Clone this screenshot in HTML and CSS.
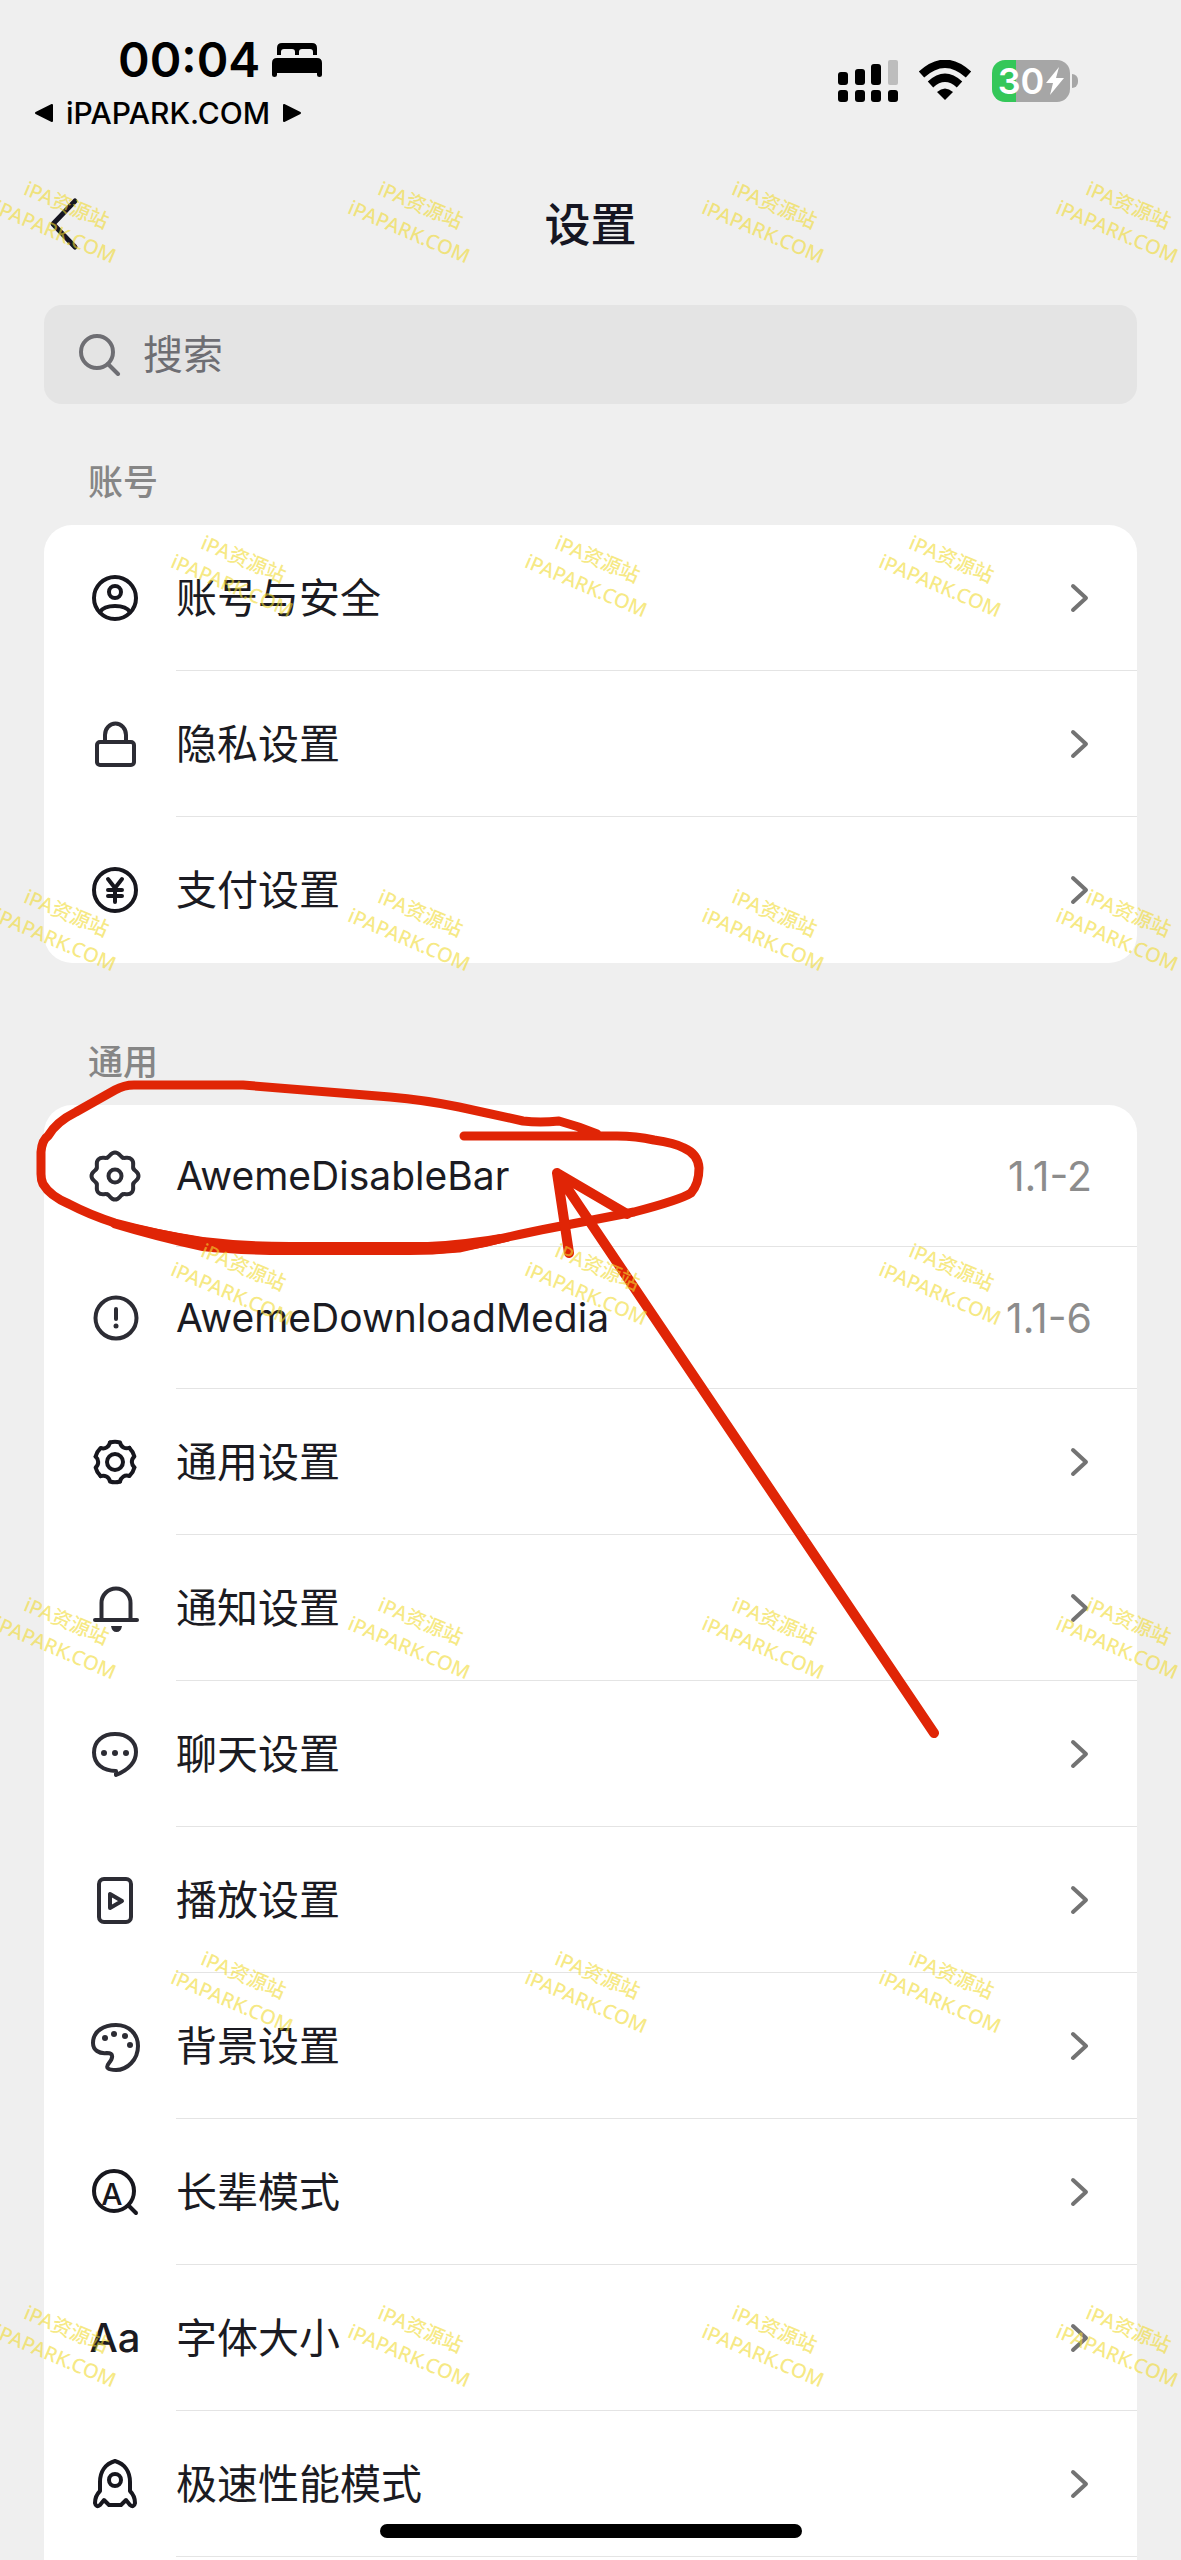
FILE: index.html
```html
<!DOCTYPE html>
<html lang="zh-CN">
<head>
<meta charset="utf-8">
<meta name="viewport" content="width=device-width, initial-scale=1">
<title>设置</title>
<link rel="stylesheet" href="styles.css">
</head>
<body>
<div class="screen">
  <header class="status">
    <div class="status-left">
      <div class="clock"><span>00:04</span>
        <svg class="bed" viewBox="0 0 50 36" aria-hidden="true"><path d="M5 13V6Q5 1 10 1H40Q45 1 45 6V13H41V10Q41 7 38 7H30Q27 7 27 10V13H23V10Q23 7 20 7H12Q9 7 9 10V13ZM5 16H45Q50 16 50 21V33Q50 35 47.500 35Q45 35 45 33V31H5V33Q5 35 2.500 35Q0 35 0 33V21Q0 16 5 16Z"/></svg>
      </div>
      <div class="return">
        <svg class="tri" viewBox="0 0 20 20" aria-hidden="true"><path d="M2 10L18 2V18Z"/></svg>
        <a href="#">iPAPARK.COM</a>
        <svg class="tri" viewBox="0 0 20 20" aria-hidden="true"><path d="M18 10L2 2V18Z"/></svg>
      </div>
    </div>
    <div class="status-right">
      <svg class="signal" viewBox="0 0 60 42" aria-hidden="true">
        <rect x="0" y="12" width="10" height="13" rx="3"/><rect x="17" y="9" width="10" height="16" rx="3"/><rect x="33" y="4" width="10" height="21" rx="3"/><rect class="dim" x="50" y="0" width="10" height="25" rx="2"/>
        <rect x="0" y="30" width="10" height="12" rx="3"/><rect x="17" y="30" width="10" height="12" rx="3"/><rect x="33" y="30" width="10" height="12" rx="3"/><rect x="50" y="30" width="10" height="12" rx="3"/>
      </svg>
      <svg class="wifi" viewBox="0 0 54 42" aria-hidden="true">
        <path class="arc" d="M3.500 14.500Q27 -7 50.500 14.500M12.500 24.500Q27 11 41.500 24.500"/><path d="M19 32Q27 25 35 32L27 40Z"/>
      </svg>
      <div class="battery"><span>30</span><svg viewBox="0 0 18 30" aria-hidden="true"><path d="M13 1L0 17H7L4 29L18 12H10Z"/></svg></div>
    </div>
  </header>

  <nav class="nav">
    <button class="back" type="button" aria-label="返回"><svg viewBox="0 0 36 56" aria-hidden="true"><path d="M31 5L9 28L31 51"/></svg></button>
    <h1>设置</h1>
  </nav>

  <label class="search">
    <svg viewBox="0 0 42 42" aria-hidden="true"><circle cx="18" cy="18" r="16"/><path d="M29 30L39 40"/></svg>
    <input type="search" placeholder="搜索" aria-label="搜索">
  </label>

  <section class="group">
    <h2>账号</h2>
    <ul class="card">
      <li><a class="row" href="#"><svg class="icon" viewBox="0 0 48 48"><circle cx="24" cy="24" r="21"/><circle cx="24" cy="18" r="6"/><path d="M9 38C14 30 34 30 39 38"/></svg><span class="cell"><span>账号与安全</span><svg class="chev" viewBox="0 0 24 32"><path d="M5 4L18 16L5 28"/></svg></span></a></li>
      <li><a class="row" href="#"><svg class="icon soft" viewBox="0 0 48 48"><rect x="6" y="22" width="37" height="23" rx="3"/><path d="M14 22V15A10.500 11.500 0 0 1 35 15V22"/></svg><span class="cell"><span>隐私设置</span><svg class="chev" viewBox="0 0 24 32"><path d="M5 4L18 16L5 28"/></svg></span></a></li>
      <li><a class="row" href="#"><svg class="icon" viewBox="0 0 48 48"><circle cx="24" cy="24" r="21"/><path d="M17 13L24 22L31 13M24 22V36M17 24H31M17 30H31"/></svg><span class="cell"><span>支付设置</span><svg class="chev" viewBox="0 0 24 32"><path d="M5 4L18 16L5 28"/></svg></span></a></li>
    </ul>
  </section>

  <section class="group last">
    <h2>通用</h2>
    <ul class="card">
      <li><a class="row plugin" href="#"><svg class="icon soft" viewBox="0 0 48 48"><g transform="translate(24 24)"><path id="lobe" d="M-7.600 -18.400C-4.800 -19.500 -4.500 -23.500 0 -23.500C4.500 -23.500 4.800 -19.500 7.600 -18.400"/><use href="#lobe" transform="rotate(45)"/><use href="#lobe" transform="rotate(90)"/><use href="#lobe" transform="rotate(135)"/><use href="#lobe" transform="rotate(180)"/><use href="#lobe" transform="rotate(225)"/><use href="#lobe" transform="rotate(270)"/><use href="#lobe" transform="rotate(315)"/><circle r="6.500"/></g></svg><span class="cell"><span>AwemeDisableBar</span><span class="value">1.1-2</span></span></a></li>
      <li><a class="row plugin" href="#"><svg class="icon soft" viewBox="0 0 48 48"><circle cx="25" cy="24" r="20.500"/><path d="M25 15V25"/><circle class="dot" cx="25" cy="32" r="2.500"/></svg><span class="cell"><span>AwemeDownloadMedia</span><span class="value">1.1-6</span></span></a></li>
      <li><a class="row" href="#"><svg class="icon" viewBox="0 0 48 48"><g transform="translate(24 24)"><path id="tooth" d="M-5 -19.500Q0 -21 5 -19.500C6 -14.500 10.400 -12.900 14.400 -14.100"/><use href="#tooth" transform="rotate(60)"/><use href="#tooth" transform="rotate(120)"/><use href="#tooth" transform="rotate(180)"/><use href="#tooth" transform="rotate(240)"/><use href="#tooth" transform="rotate(300)"/><circle r="8"/></g></svg><span class="cell"><span>通用设置</span><svg class="chev" viewBox="0 0 24 32"><path d="M5 4L18 16L5 28"/></svg></span></a></li>
      <li><a class="row" href="#"><svg class="icon soft" viewBox="0 0 48 48"><path d="M4 36H46M10.500 36V19A14.500 14.500 0 0 1 39.500 19V36"/><path class="dot" d="M20 42H31Q30 48 25.500 48Q21 48 20 42Z"/></svg><span class="cell"><span>通知设置</span><svg class="chev" viewBox="0 0 24 32"><path d="M5 4L18 16L5 28"/></svg></span></a></li>
      <li><a class="row" href="#"><svg class="icon soft" viewBox="0 0 48 48"><path d="M25 41C12 41 3 34 3 22.500C3 11 12 4 24 4C36 4 45 11 45 22C45 33 37 40 25 45Z"/><circle class="dot" cx="13" cy="23" r="3"/><circle class="dot" cx="24" cy="23" r="3"/><circle class="dot" cx="35" cy="23" r="3"/></svg><span class="cell"><span>聊天设置</span><svg class="chev" viewBox="0 0 24 32"><path d="M5 4L18 16L5 28"/></svg></span></a></li>
      <li><a class="row" href="#"><svg class="icon soft" viewBox="0 0 48 48"><rect x="8" y="3" width="32" height="43" rx="5"/><path d="M19 18V32L31 25Z"/></svg><span class="cell"><span>播放设置</span><svg class="chev" viewBox="0 0 24 32"><path d="M5 4L18 16L5 28"/></svg></span></a></li>
      <li><a class="row" href="#"><svg class="icon soft" viewBox="0 0 48 48"><path d="M16 31C8 32 2 28 2 21C2 9 13 3 25 3C38 3 47 12 47 24C47 38 36 48 25 48C17 48 14 46 18 41C22 36 23 31 16 31Z"/><circle class="dot" cx="14" cy="16" r="3"/><circle class="dot" cx="23" cy="12" r="3"/><circle class="dot" cx="34" cy="14" r="3"/><circle class="dot" cx="39" cy="23" r="3"/></svg><span class="cell"><span>背景设置</span><svg class="chev" viewBox="0 0 24 32"><path d="M5 4L18 16L5 28"/></svg></span></a></li>
      <li><a class="row" href="#"><svg class="icon" viewBox="0 0 48 48"><circle cx="23" cy="23" r="20"/><path d="M38 38L45 45"/><text class="lens" x="21" y="37" text-anchor="middle">A</text></svg><span class="cell"><span>长辈模式</span><svg class="chev" viewBox="0 0 24 32"><path d="M5 4L18 16L5 28"/></svg></span></a></li>
      <li><a class="row" href="#"><span class="icon glyphs">Aa</span><span class="cell"><span>字体大小</span><svg class="chev" viewBox="0 0 24 32"><path d="M5 4L18 16L5 28"/></svg></span></a></li>
      <li><a class="row" href="#"><svg class="icon" viewBox="0 0 48 48"><path d="M24 1C14 4 9 12 9 22V31Q4 36 4 43Q5 48 9 45L13 40L18 45H30L35 40L39 45Q43 48 44 43Q44 36 39 31V22C39 12 34 4 24 1Z"/><circle cx="24" cy="20" r="6"/></svg><span class="cell"><span>极速性能模式</span><svg class="chev" viewBox="0 0 24 32"><path d="M5 4L18 16L5 28"/></svg></span></a></li>
    </ul>
  </section>

  <svg class="scribble" viewBox="0 0 690 680" aria-hidden="true">
    <path d="M434 56H587Q606 56 624 60Q645 63 654 68Q668 74 669 88Q669 104 661 113Q650 120 604 132L521 148Q490 154 429 168L402 170H264Q220 169 172 162Q126 154 85 143Q60 135 39 124Q20 116 13 104Q11 100 11 94V72Q12 60 18 56Q26 42 46 32L85 10Q94 5 104 5H213L360 17Q395 20 429 27L493 41Q510 43 529 41Q548 46 567 54"/>
    <path class="thick" d="M60 130L83 139Q128 150 173 157Q215 162 260 162H390Q420 162 470 154L480 161Q430 175 380 175H240Q200 174 172 171Q126 161 83 148Z"/>
    <path class="arrow" d="M904 653L527 93L539 173M527 93L597 134"/>
  </svg>

  <div class="marks" aria-hidden="true">
    <div class="band"><p>iPA资源站<br>iPAPARK.COM</p><p>iPA资源站<br>iPAPARK.COM</p><p>iPA资源站<br>iPAPARK.COM</p><p>iPA资源站<br>iPAPARK.COM</p></div>
    <div class="band shift"><p>iPA资源站<br>iPAPARK.COM</p><p>iPA资源站<br>iPAPARK.COM</p><p>iPA资源站<br>iPAPARK.COM</p></div>
    <div class="band"><p>iPA资源站<br>iPAPARK.COM</p><p>iPA资源站<br>iPAPARK.COM</p><p>iPA资源站<br>iPAPARK.COM</p><p>iPA资源站<br>iPAPARK.COM</p></div>
    <div class="band shift"><p>iPA资源站<br>iPAPARK.COM</p><p>iPA资源站<br>iPAPARK.COM</p><p>iPA资源站<br>iPAPARK.COM</p></div>
    <div class="band"><p>iPA资源站<br>iPAPARK.COM</p><p>iPA资源站<br>iPAPARK.COM</p><p>iPA资源站<br>iPAPARK.COM</p><p>iPA资源站<br>iPAPARK.COM</p></div>
    <div class="band shift"><p>iPA资源站<br>iPAPARK.COM</p><p>iPA资源站<br>iPAPARK.COM</p><p>iPA资源站<br>iPAPARK.COM</p></div>
    <div class="band"><p>iPA资源站<br>iPAPARK.COM</p><p>iPA资源站<br>iPAPARK.COM</p><p>iPA资源站<br>iPAPARK.COM</p><p>iPA资源站<br>iPAPARK.COM</p></div>
  </div>
  <div class="home"></div>
</div>
</body>
</html>
```

FILE: styles.css
```css
* { box-sizing: border-box; }

body {
  margin: 0;
  background: #efefef;
  color: #1b1b22;
  font-family: Inter, "Noto Sans CJK SC", sans-serif;
}

h1, h2, p, ul { margin: 0; padding: 0; }
ul { list-style: none; }
a { color: inherit; text-decoration: none; }
svg { display: block; flex: none; }

.screen {
  position: relative;
  display: flex;
  flex-direction: column;
  min-height: 100vh;
  overflow: hidden;
}

/* Status bar */
.status {
  display: flex;
  justify-content: space-between;
  align-items: center;
  padding: 30px 111px 0 34px;
  color: #000;
}
.status-left { display: flex; flex-direction: column; gap: 4px; }
.clock {
  display: flex;
  align-items: center;
  gap: 12px;
  padding-left: 84px;
  font-size: 48px;
  font-weight: 600;
  line-height: 60px;
}
.bed { width: 50px; height: 36px; }
.return {
  display: flex;
  align-items: center;
  gap: 12px;
  font-size: 30px;
  font-weight: 500;
  line-height: 38px;
}
.tri { width: 20px; height: 20px; }
.tri path { stroke: #000; stroke-width: 2; stroke-linejoin: round; }
.status-right { display: flex; align-items: center; gap: 20px; }
.signal { width: 60px; height: 42px; }
.signal .dim { fill: #bdbdbd; }
.wifi { width: 54px; height: 42px; }
.wifi .arc { fill: none; stroke: #000; stroke-width: 8; }
.battery {
  position: relative;
  display: flex;
  align-items: center;
  justify-content: center;
  gap: 2px;
  width: 78px;
  height: 42px;
  border-radius: 13px;
  background: linear-gradient(90deg, #34c759 31%, #a6a6a6 31%);
  color: #fff;
  font-size: 36px;
  font-weight: 600;
  line-height: 42px;
}
.battery svg { width: 18px; height: 30px; fill: #fff; }
.battery::after {
  content: "";
  position: absolute;
  left: 100%;
  top: 14px;
  width: 6px;
  height: 14px;
  margin-left: 2px;
  border-radius: 0 7px 7px 0;
  background: #a6a6a6;
}

/* Title bar */
.nav {
  display: grid;
  grid-template-columns: 64px 1fr 64px;
  align-items: center;
  height: 173px;
  padding: 10px 44px 0;
}
.nav h1 {
  color: #161622;
  font-size: 46px;
  font-weight: 500;
  line-height: 64px;
  text-align: center;
}
.back { justify-self: start; padding: 0; border: 0; background: none; }
.back svg { width: 36px; height: 56px; }
.back path { fill: none; stroke: #161622; stroke-width: 5; stroke-linecap: round; stroke-linejoin: round; }

/* Search */
.search {
  display: flex;
  align-items: center;
  gap: 22px;
  height: 99px;
  margin: 0 44px;
  padding: 0 35px;
  border-radius: 18px;
  background: #e4e4e4;
}
.search svg { width: 42px; height: 42px; fill: none; stroke: #6e6e73; stroke-width: 4; stroke-linecap: round; }
.search input {
  flex: 1;
  min-width: 0;
  padding: 0;
  border: 0;
  outline: 0;
  background: none;
  color: #1b1b22;
  font: 400 40px/56px Inter, "Noto Sans CJK SC", sans-serif;
}
.search input::placeholder { color: #6e6e73; opacity: 1; }

/* Groups */
.group { padding: 0 44px; }
.group + .group { margin-top: 21px; }
.group h2 {
  padding: 54px 44px 19px;
  color: #868686;
  font-size: 35px;
  font-weight: 500;
  line-height: 48px;
}
.card { overflow: hidden; border-radius: 28px; background: #fff; }
.last { display: flex; flex: 1; flex-direction: column; }
.last .card { flex: 1; border-radius: 28px 28px 0 0; }

.row {
  display: flex;
  align-items: center;
  gap: 37px;
  height: 146px;
  padding-left: 47px;
  font-size: 41px;
  line-height: 60px;
}
.plugin { height: 142px; font-size: 39px; }
.cell {
  display: flex;
  flex: 1;
  align-items: center;
  justify-content: space-between;
  align-self: stretch;
  padding-right: 45px;
  border-bottom: 1px solid #e4e4e4;
}
.group:not(.last) li:last-child .cell { border-bottom-color: transparent; }
.value { color: #8c8c8c; font-size: 41px; }
.icon {
  flex: none;
  width: 48px;
  height: 48px;
  overflow: visible;
  fill: none;
  stroke: #17171e;
  stroke-width: 4;
  stroke-linecap: round;
  stroke-linejoin: round;
}
.soft { stroke: #2c2c34; }
.dot { fill: #2c2c34; stroke: none; }
.lens { fill: #17171e; stroke: none; font-size: 30px; font-weight: 500; }
.glyphs {
  display: flex;
  align-items: center;
  justify-content: center;
  font-size: 40px;
  font-weight: 500;
  line-height: 48px;
}
.chev { width: 24px; height: 32px; fill: none; stroke: #737373; stroke-width: 4; stroke-linecap: round; stroke-linejoin: round; }

/* Hand-drawn annotation */
.scribble {
  position: absolute;
  left: 30px;
  top: 1080px;
  width: 690px;
  height: 680px;
  overflow: visible;
  fill: none;
  stroke: #e02506;
  stroke-width: 9;
  stroke-linecap: round;
  stroke-linejoin: round;
  pointer-events: none;
}
.scribble .thick { fill: #e02506; stroke: none; }
.scribble .arrow { stroke-width: 10; }

/* Repeating watermark */
.marks {
  position: absolute;
  inset: 0;
  padding-top: 41px;
  overflow: hidden;
  pointer-events: none;
}
.band { display: flex; height: 354px; margin-left: -116px; }
.shift { margin-left: 61px; }
.band p {
  display: flex;
  flex: none;
  align-items: center;
  justify-content: center;
  width: 354px;
  color: rgba(240, 218, 50, 0.6);
  font: 500 20px/29px "Noto Sans", "Noto Sans CJK SC", sans-serif;
  text-align: center;
  transform: rotate(23deg);
}

.home {
  position: fixed;
  bottom: 22px;
  left: 50%;
  width: 422px;
  height: 14px;
  border-radius: 7px;
  background: #000;
  transform: translateX(-50%);
}
```
